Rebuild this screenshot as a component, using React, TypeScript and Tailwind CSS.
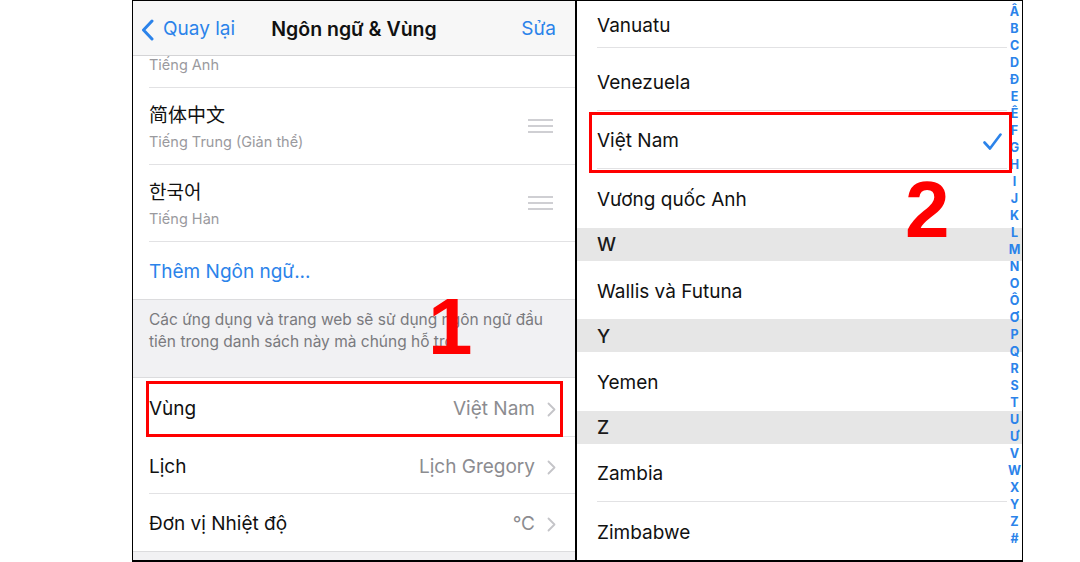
import { ReactNode } from 'react'

const FONT = 'font-["Inter","Noto_Sans_CJK_SC","Noto_Sans_CJK_KR",sans-serif]'
const BLUE = 'text-[#2b83ea]'

const INDEX = ['Â', 'B', 'C', 'D', 'Đ', 'E', 'Ê', 'F', 'G', 'H', 'I', 'J', 'K', 'L', 'M', 'N', 'O', 'Ô', 'Ơ', 'P', 'Q', 'R', 'S', 'T', 'U', 'Ư', 'V', 'W', 'X', 'Y', 'Z', '#']

function Handle() {
  return (
    <div className="flex w-[25px] flex-col gap-[4px]">
      <div className="h-[2px] bg-[#cfcfd3]" />
      <div className="h-[2px] bg-[#cfcfd3]" />
      <div className="h-[2px] bg-[#cfcfd3]" />
    </div>
  )
}

function Chevron() {
  return (
    <svg width="9" height="15" viewBox="0 0 9 15" fill="none" className="ml-[12px]">
      <path d="M1.5 1.5l6 6-6 6" stroke="#c4c4c8" strokeWidth="1.8" strokeLinecap="round" strokeLinejoin="round" />
    </svg>
  )
}

function LangRow({ title, sub, line = true }: { title: string; sub: string; line?: boolean }) {
  return (
    <div className="flex h-[77px] shrink-0 pl-[16px]">
      <div className={'flex flex-1 items-center justify-between pr-[22px] ' + (line ? 'border-b border-[#e2e2e4]' : '')}>
        <div className="flex flex-col pt-[3px]">
          <span className="text-[19px] leading-[26px] text-[#111]">{title}</span>
          <span className="mt-[2px] text-[14.5px] leading-[22px] text-[#9a9a9e]">{sub}</span>
        </div>
        <Handle />
      </div>
    </div>
  )
}

function SettingRow({ label, value, h, line = true }: { label: string; value: string; h: string; line?: boolean }) {
  return (
    <div className={'flex shrink-0 pl-[16px] ' + h}>
      <div className={'flex flex-1 items-center justify-between pt-[4px] pr-[19px] ' + (line ? 'border-b border-[#e2e2e4]' : '')}>
        <span className="text-[19px] text-[#111]">{label}</span>
        <div className="flex items-center">
          <span className="text-[19px] text-[#8c8c90]">{value}</span>
          <Chevron />
        </div>
      </div>
    </div>
  )
}

function Country({ name, h = 'h-[58.5px]', line = false, children }: { name: string; h?: string; line?: boolean; children?: ReactNode }) {
  return (
    <div className={'flex shrink-0 pl-[20px] ' + h}>
      <div className={'mr-[15px] flex flex-1 items-center justify-between pt-[4px] pr-[5px] ' + (line ? 'border-b border-[#e2e2e4]' : '')}>
        <span className="text-[19px] text-[#111]">{name}</span>
        {children}
      </div>
    </div>
  )
}

function Header({ letter }: { letter: string }) {
  return (
    <div className="flex h-[33px] shrink-0 items-center bg-[#e6e6e6] pt-[3px] pl-[20px]">
      <span className="text-[19px] font-medium text-[#1a1a1a]">{letter}</span>
    </div>
  )
}

export default function App() {
  return (
    <div className={'relative flex h-[562px] w-[1080px] overflow-hidden bg-white ' + FONT}>
      <div className="ml-[132px] flex h-full shrink-0 border-t border-r border-b-2 border-l border-black">
        {/* left: language & region settings */}
        <div className="flex w-[444px] shrink-0 flex-col overflow-hidden border-r-2 border-black bg-[#f1f1f3]">
          <div className="flex h-[55px] shrink-0 items-center border-b border-[#d4d4d6] bg-[#f7f7f7] px-[8px] pt-[3px]">
            <div className="flex w-[115px] shrink-0 items-center">
              <svg width="13" height="22" viewBox="0 0 13 22" fill="none">
                <path d="M11 2L2.5 11 11 20" stroke="#2b83ea" strokeWidth="3" strokeLinecap="round" strokeLinejoin="round" />
              </svg>
              <span className={'ml-[9px] text-[19px] whitespace-nowrap ' + BLUE}>Quay lại</span>
            </div>
            <span className="min-w-0 flex-1 text-center text-[19.5px] font-semibold whitespace-nowrap text-[#111]">Ngôn ngữ &amp; Vùng</span>
            <span className={'w-[115px] shrink-0 pr-[11px] text-right text-[19px] ' + BLUE}>Sửa</span>
          </div>

          <div className="flex h-[32px] shrink-0 flex-col justify-end overflow-hidden bg-white">
            <LangRow title="English" sub="Tiếng Anh" />
          </div>
          <div className="flex shrink-0 flex-col bg-white">
            <LangRow title="简体中文" sub="Tiếng Trung (Giản thể)" />
            <LangRow title="한국어" sub="Tiếng Hàn" />
            <div className="flex h-[58px] items-center border-b border-[#dcdcde] pt-[4px] pl-[16px]">
              <span className={'text-[19px] ' + BLUE}>Thêm Ngôn ngữ...</span>
            </div>
          </div>

          <div className="h-[78px] shrink-0 border-b border-[#dcdcde] px-[16px] pt-[9px] text-[15.5px] leading-[22px] text-[#7a7a7e]">
            Các ứng dụng và trang web sẽ sử dụng ngôn ngữ đầu tiên trong danh sách này mà chúng hỗ trợ.
          </div>

          <div className="flex shrink-0 flex-col border-b border-[#dcdcde] bg-white">
            <SettingRow label="Vùng" value="Việt Nam" h="h-[59px]" />
            <SettingRow label="Lịch" value="Lịch Gregory" h="h-[57px]" />
            <SettingRow label="Đơn vị Nhiệt độ" value="°C" h="h-[57px]" line={false} />
          </div>
        </div>

        {/* right: region list */}
        <div className="relative flex w-[445px] shrink-0 flex-col overflow-hidden bg-white">
          <Country name="Vanuatu" h="h-[51px] pb-[4px]" line />
          <Country name="Venezuela" line />
          <Country name="Việt Nam" line>
            <svg width="19" height="17" viewBox="0 0 19 17" fill="none">
              <path d="M1.5 9.5l5.5 6L17.5 1.5" stroke="#2b83ea" strokeWidth="2.6" strokeLinecap="round" strokeLinejoin="round" />
            </svg>
          </Country>
          <Country name="Vương quốc Anh" />
          <Header letter="W" />
          <Country name="Wallis và Futuna" />
          <Header letter="Y" />
          <Country name="Yemen" />
          <Header letter="Z" />
          <Country name="Zambia" line />
          <Country name="Zimbabwe" />

          <div className="absolute top-0 right-0 bottom-0 flex w-[15px] flex-col items-center pt-[2px]">
            {INDEX.map((l) => (
              <span key={l} className={'text-[12.5px] leading-[17px] font-bold ' + BLUE}>
                {l}
              </span>
            ))}
          </div>
        </div>
      </div>

      {/* annotations */}
      <div className="absolute top-[381px] left-[146px] h-[56px] w-[417px] border-[3px] border-[#ff0000]" />
      <div className="absolute top-[112px] left-[589px] h-[61px] w-[423px] border-[3px] border-[#ff0000]" />
      <span className='absolute top-[287px] left-[428px] font-["Liberation_Sans",Arial,sans-serif] text-[80px] leading-[80px] font-bold text-[#ff0000]'>1</span>
      <span className='absolute top-[170px] left-[905px] font-["Liberation_Sans",Arial,sans-serif] text-[80px] leading-[80px] font-bold text-[#ff0000]'>2</span>
    </div>
  )
}
